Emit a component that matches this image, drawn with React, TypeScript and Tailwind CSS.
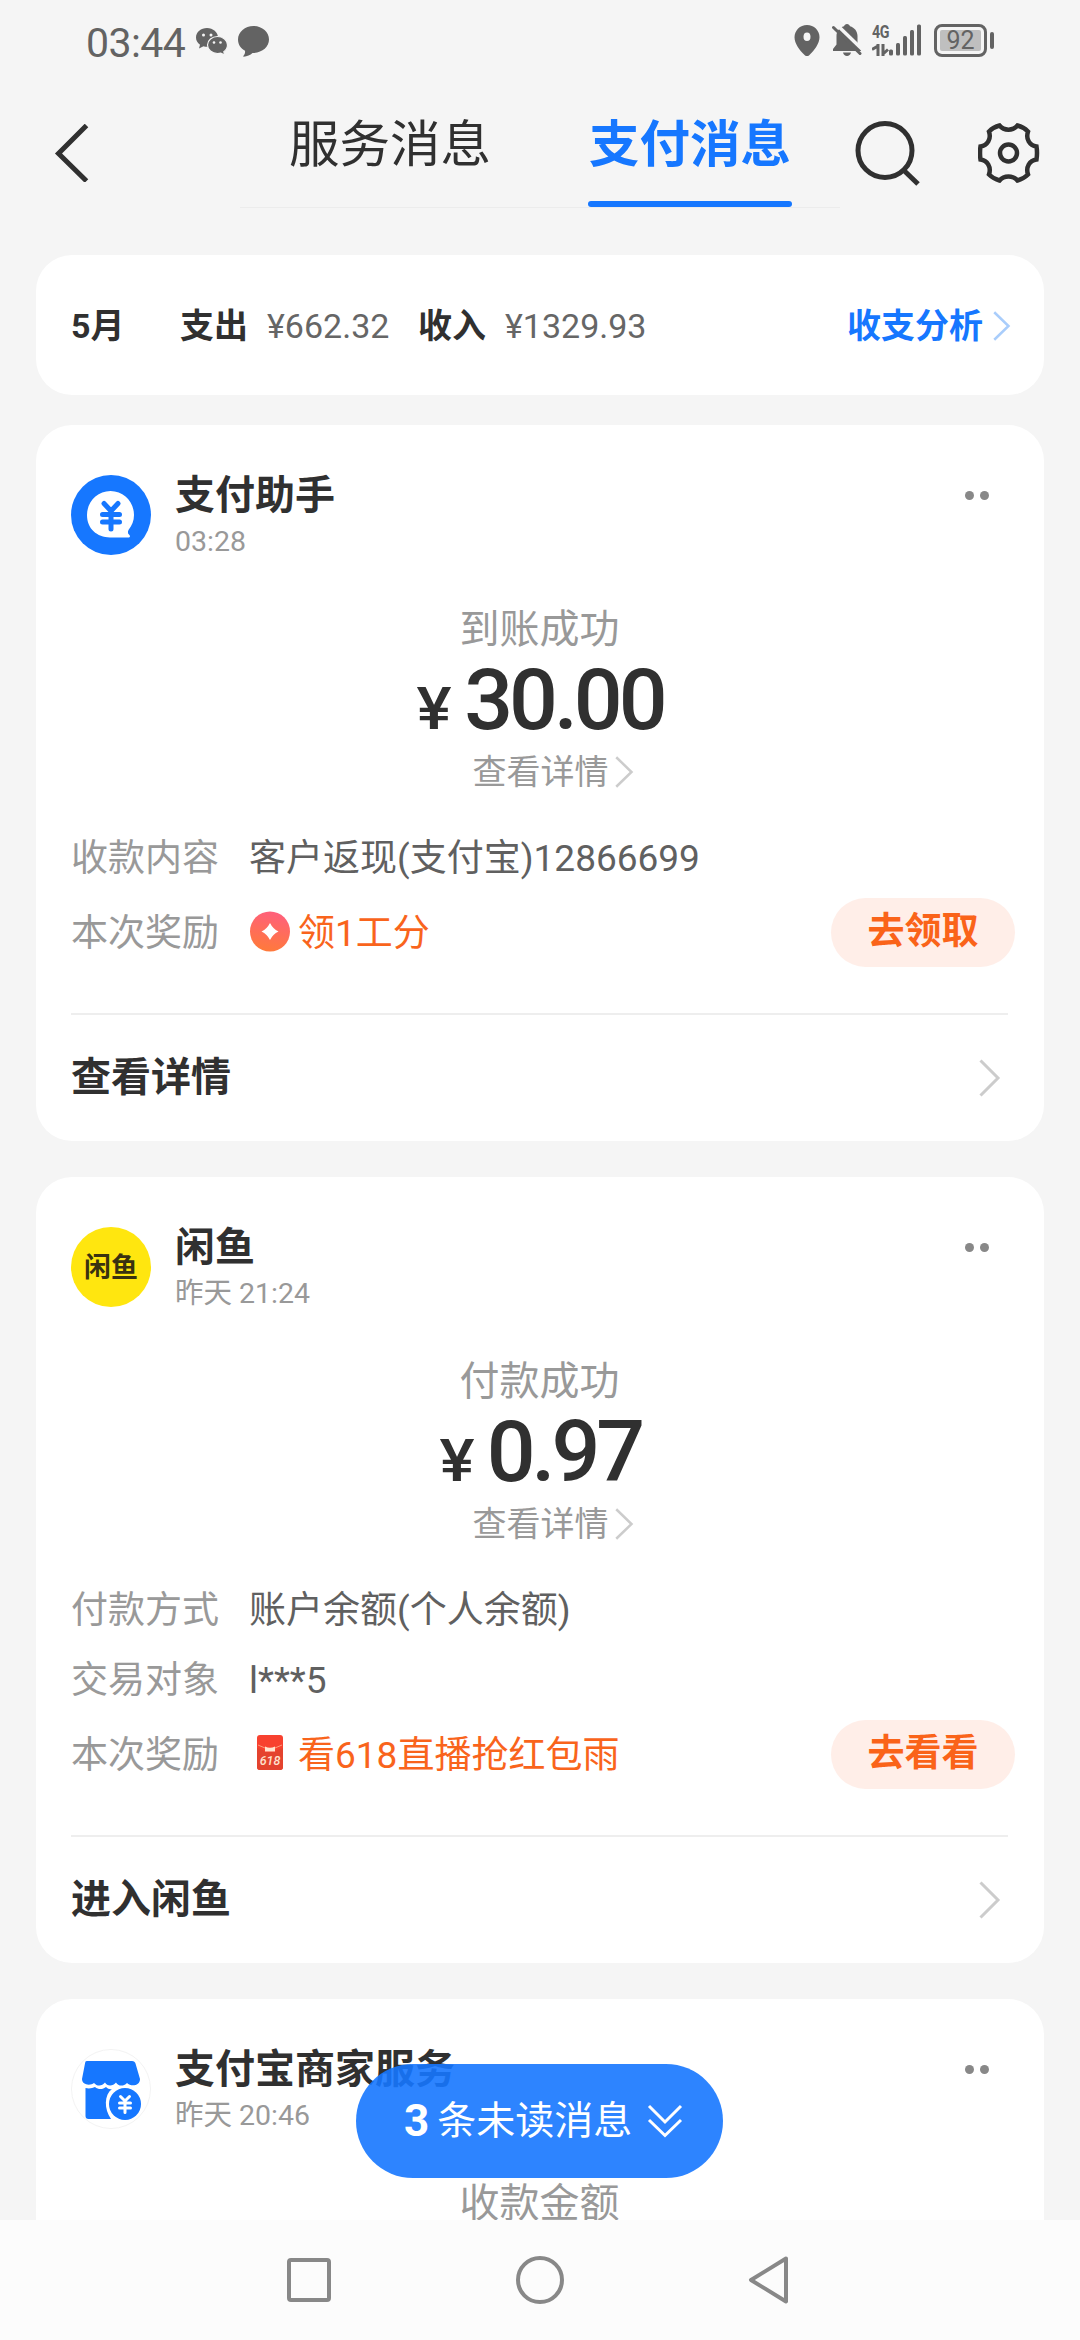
import React from 'react';

type Detail = { label: string; value: string };

interface MessageCardProps {
  avatar: React.ReactNode;
  title: string;
  time: string;
  status: string;
  amount?: string;
  details?: Detail[];
  reward?: { icon: React.ReactNode; text: string; action: string };
  footer?: string;
}

const Chevron: React.FC<{ className: string; width: number; height: number; stroke: number }> = ({
  className,
  width,
  height,
  stroke,
}) => (
  <svg className={className} width={width} height={height} viewBox={`0 0 ${width} ${height}`} fill="none">
    <path
      d={`M${stroke / 2} ${stroke / 2}L${width - stroke} ${height / 2}L${stroke / 2} ${height - stroke / 2}`}
      stroke="currentColor"
      strokeWidth={stroke}
    />
  </svg>
);

const StatusBar = () => (
  <div className="h-20 flex items-start pl-[86px] text-[#636363]">
    <span className="mt-[23px] text-[41px] leading-[40px] w-[110px] tracking-[-0.6px]">03:44</span>
    {/* WeChat */}
    <svg className="mt-[27px]" width="32" height="28" viewBox="0 0 32 28">
      <path
        d="M11 1C5 1 0 5 0 10.500c0 3 1.500 5.500 4 7.200L3 21.500l4.500-2.300c1.200.4 2.300.5 3.500.5 6 0 11-4 11-9.200S17 1 11 1z"
        fill="currentColor"
      />
      <path
        d="M21.500 9.500c-5.500 0-10 3.800-10 8.500s4.500 8.500 10 8.500c1.200 0 2.300-.1 3.300-.4l4 2-1-3.300c2.200-1.600 3.700-4 3.700-6.800 0-4.700-4.500-8.500-10-8.500z"
        fill="currentColor"
        stroke="#f5f5f5"
        strokeWidth="1.200"
      />
      <circle cx="7.500" cy="8" r="1.500" fill="#f5f5f5" />
      <circle cx="15" cy="8" r="1.500" fill="#f5f5f5" />
      <circle cx="18" cy="15.500" r="1.300" fill="#f5f5f5" />
      <circle cx="24.500" cy="15.500" r="1.300" fill="#f5f5f5" />
    </svg>
    {/* SMS bubble */}
    <svg className="mt-[26px] ml-[10px]" width="32" height="31" viewBox="0 0 32 31">
      <path
        d="M15.500 0C7 0 0 6 0 13.500c0 5 2.800 9 7 11.200.3 2-.3 3.800-1.700 5.300-.3.500 0 .8.500.8 3.200-.3 6.500-1.700 8.700-3.800C24 27 31 21 31 13.500S24 0 15.500 0z"
        fill="currentColor"
      />
    </svg>

    <div className="ml-auto mr-[86px] mt-[24px] flex">
      <svg width="26" height="33" viewBox="0 0 26 33" fill="currentColor">
        <path
          fillRule="evenodd"
          d="M13 1C6 1 .5 6.500.5 13.200c0 6 5 13.300 10.300 18 1.300 1.200 3.100 1.200 4.400 0 5.300-4.700 10.300-12 10.300-18C25.500 6.500 20 1 13 1zm0 7.500a3.500 4.300 0 1 1 0 8.600 3.500 4.300 0 0 1 0-8.600z"
        />
      </svg>
      <svg className="ml-[12px]" width="30" height="33" viewBox="0 0 30 33">
        <path
          d="M15 0c-1.500 0-2.700 1-3 2.300C7.500 3.500 4.500 7.500 4.500 12v8.500L1 25v2h28v-2l-3.500-4.500V12c0-4.500-3-8.500-7.500-9.700C17.700 1 16.500 0 15 0zM11 28.500h8c-.5 2.200-2 3.500-4 3.500s-3.500-1.300-4-3.500z"
          fill="currentColor"
        />
        <path d="M3.500-.5L32 27" stroke="#f5f5f5" strokeWidth="3.500" />
        <path d="M1.500 3.500L28 29.500" stroke="currentColor" strokeWidth="3" strokeLinecap="round" />
      </svg>
      <div className="ml-[10px] w-[17px]">
        <div className="h-[16px] text-[19px] leading-[16px] font-bold tracking-[-0.5px] scale-x-75 origin-left">4G</div>
        <svg className="mt-[4px]" width="17" height="12" viewBox="0 0 17 12">
          <path d="M6 0v12M0 5.500L6 2M11 0v12M11 10l5-4.500" stroke="currentColor" strokeWidth="3" fill="none" />
        </svg>
      </div>
      <svg width="33" height="32" viewBox="0 0 33 32" fill="currentColor">
        <rect x="0" y="25.500" width="4" height="6" rx="1.500" />
        <rect x="7" y="19" width="4" height="12.500" rx="1.500" />
        <rect x="14" y="12" width="4" height="19.500" rx="1.500" />
        <rect x="21" y="6" width="4" height="25.500" rx="1.500" />
        <rect x="28" y="0.500" width="4" height="31" rx="1.500" />
      </svg>
      <div className="ml-[12px] w-[53px] h-[33px] rounded-[8px] border-3 border-current p-[3px]">
        <div className="size-full rounded-[2px] bg-[#bfbfbf] text-[25px] leading-[22px] text-center">92</div>
      </div>
      <div className="ml-[3px] mt-[8px] w-[4px] h-[17px] rounded-[2px] bg-current" />
    </div>
  </div>
);

const Header = () => (
  <header className="h-[175px] flex items-start text-[#303030]">
    <svg className="mt-[44px] ml-[54px]" width="36" height="58" viewBox="0 0 36 58" fill="none">
      <path d="M32.500 1.500L4.500 29.500l28 27.500" stroke="currentColor" strokeWidth="5" />
    </svg>
    <nav className="ml-[150px] w-[600px] h-[128px] border-b border-[#ececec] flex text-[50.5px] leading-[60px]">
      <div className="w-[300px] pt-[35px] text-center">服务消息</div>
      <div className="w-[300px] pt-[35px] text-center font-bold text-[#1677ff] relative">
        支付消息
        <span className="absolute left-[48px] top-[121px] w-[204px] h-[6px] rounded-full bg-[#1677ff]" />
      </div>
    </nav>
    <svg className="mt-[39px] ml-[14px]" width="68" height="70" viewBox="0 0 68 70" fill="none" stroke="currentColor">
      <circle cx="31" cy="31.500" r="27" strokeWidth="5" />
      <path d="M50 51.500l14 13.500" strokeWidth="5" />
    </svg>
    <svg className="mt-[42px] ml-[56px]" width="62" height="62" viewBox="0 0 62 62" fill="none" stroke="currentColor">
      <path
        d="M21.500 3.500C26 9 35 9 39.500 3.500Q45.500 5 50 9.500C47.500 17 51.500 23.500 58.500 24.500Q59.500 31 58.500 37.500C51.500 38.500 47.500 45 50 52.500Q45.500 57 39.500 58.500C35 53 26 53 21.500 58.500Q15.500 57 11 52.500C13.500 45 9.500 38.500 2.500 37.500Q1.500 31 2.500 24.500C9.500 23.500 13.500 17 11 9.500Q15.500 5 21.500 3.500Z"
        strokeWidth="4.500"
      />
      <circle cx="30.500" cy="31" r="8.500" strokeWidth="4.500" />
    </svg>
  </header>
);

const PayAvatar = () => (
  <svg width="80" height="80" viewBox="0 0 80 80">
    <circle cx="40" cy="40" r="40" fill="#1677ff" />
    <path
      d="M39.500 16C26 16 16 27 16 40c0 14 10 22 23 22.500h18c2.200 0 2.500-1.500 1.200-2.700-1.400-1.200-1.700-2.800-.7-4.800C61 50.500 63 46 63 40c0-13-10-24-23.500-24z"
      fill="#fff"
    />
    <path
      d="M33 28.500l7 7.500 7-7.500M40 37v17M31.500 39.500h17M31.500 47h17"
      fill="none"
      stroke="#1677ff"
      strokeWidth="5"
      strokeLinecap="round"
    />
  </svg>
);

const FishAvatar = () => (
  <div className="size-20 pt-[3px] rounded-full bg-[#ffe60f] flex items-center justify-center text-[27px] leading-[27px] font-bold text-[#3a3210]">
    闲鱼
  </div>
);

const ShopAvatar = () => (
  <svg width="80" height="80" viewBox="0 0 80 80" fill="#1677ff">
    <circle cx="40" cy="40" r="39.500" fill="#fff" stroke="#f3f3f3" />
    <path d="M16 12h45c2 0 3 1 3.500 2.500L69 30c0 7-9 8-13 4-4 4-9 3-11-.5-3 4-9 4-11 0-3 4-8 4-11 .5-4 3-12 2-12-4l3-15.500c.5-1.500 0-2.500 2-2.500z" />
    <path d="M14.500 39c4 1 7 0 9.500-1 3.500 3 8 2.500 11 0 2 2 4 2.500 6 2-8 6-8 20-1 30H17.500c-2 0-3-1-3-3z" />
    <circle cx="54" cy="55" r="16" />
    <path
      d="M49.500 47.500l4.500 4.500 4.500-4.500M54 52.500v11M48.500 54h11M48.500 59h11"
      fill="none"
      stroke="#fff"
      strokeWidth="3"
      strokeLinecap="round"
    />
  </svg>
);

const PointIcon = () => (
  <svg width="40" height="41" viewBox="0 0 40 41">
    <defs>
      <linearGradient id="point" x1="0.600" y1="0" x2="0.400" y2="1">
        <stop offset="0" stopColor="#ff5f7c" />
        <stop offset="1" stopColor="#ff7a3a" />
      </linearGradient>
    </defs>
    <circle cx="20" cy="20.500" r="20" fill="url(#point)" />
    <path d="M20 12q2.800 5.700 8.500 8.500q-5.700 2.800-8.500 8.500q-2.800-5.700-8.500-8.500q5.700-2.800 8.500-8.500z" fill="#fff" />
  </svg>
);

const RedPacketIcon = () => (
  <svg width="40" height="40" viewBox="0 0 40 40">
    <rect x="7" y="2" width="26" height="35" rx="3" fill="#f8412f" />
    <path d="M7 15q6 1 8 4h10q2-3 8-4v19q0 3-3 3H10q-3 0-3-3z" fill="#e4432e" />
    <path d="M8 12l7 3M32 12l-7 3" stroke="#ff9a7a" strokeWidth="1" />
    <path d="M15 13.500q5 2.500 10 0v5H15z" fill="#ffe3cf" />
    <text x="20" y="32" textAnchor="middle" fontSize="12.500" fontWeight="500" fontStyle="italic" fill="#ffe3cf">
      618
    </text>
  </svg>
);

const MessageCard: React.FC<MessageCardProps> = ({ avatar, title, time, status, amount, details, reward, footer }) => (
  <section className="bg-white rounded-[36px] pl-[35px] pr-9 pt-[50px] shrink-0 last:pb-20">
    <div className="flex items-start h-[130px]">
      {avatar}
      <div className="ml-6">
        <h2 className="mt-px text-[40px] leading-[40px] font-bold text-[#303030]">{title}</h2>
        <p className="mt-[9px] text-[28.5px] leading-[34px] text-[#999]">{time}</p>
      </div>
      <div className="ml-auto mr-[19px] mt-[16px] flex gap-[6px]">
        <span className="size-[9px] rounded-full bg-[#888]" />
        <span className="size-[9px] rounded-full bg-[#888]" />
      </div>
    </div>

    <div className="flex flex-col items-center text-[#999]">
      <p className="text-[40px] leading-[50px]">{status}</p>
      {amount && (
        <>
          <p className="h-[90px] pl-[3px] flex items-baseline font-medium text-[#303030]">
            <span className="text-[60px] leading-[90px] mr-[14px] scale-x-110">¥</span>
            <span className="text-[86px] leading-[90px] tracking-[-4px]">{amount}</span>
          </p>
          <p className="mt-[6px] flex items-center text-[34px] leading-[42px] pl-[27px]">
            查看详情
            <Chevron className="ml-[6px] text-[#ccc]" width={19} height={32} stroke={2.5} />
          </p>
        </>
      )}
    </div>

    {details && (
      <dl className="mt-[31px] text-[37px]">
        {details.map((row) => (
          <div key={row.label} className="flex h-[70px] items-center">
            <dt className="w-[178px] text-[#999]">{row.label}</dt>
            <dd className="text-[#606060]">{row.value}</dd>
          </div>
        ))}
      </dl>
    )}

    {reward && (
      <div className="flex h-[80px] items-center text-[37px]">
        <span className="w-[179px] text-[#999]">本次奖励</span>
        <span className="mb-[6px]">{reward.icon}</span>
        <span className="ml-[8px] text-[#f9641c]">{reward.text}</span>
        <button className="ml-auto mr-[-7px] mb-[4px] w-[184px] h-[69px] rounded-full bg-[#ffeee8] font-bold text-[#fa6319]">
          {reward.action}
        </button>
      </div>
    )}

    {footer && (
      <div className="mt-[39px] h-[128px] border-t-2 border-[#eee] flex items-center justify-between">
        <span className="text-[40px] font-bold text-[#303030]">{footer}</span>
        <Chevron className="mr-[7px] text-[#ccc]" width={22} height={38} stroke={3} />
      </div>
    )}
  </section>
);

const NavBar = () => (
  <footer className="h-[120px] shrink-0 bg-[#fcfcfc] flex items-center justify-center gap-[183px] text-[#888]">
    <svg width="48" height="48" viewBox="0 0 48 48" fill="none" stroke="currentColor" strokeWidth="4">
      <rect x="4" y="4" width="40" height="40" rx="2" />
    </svg>
    <svg width="48" height="48" viewBox="0 0 48 48" fill="none" stroke="currentColor" strokeWidth="4">
      <circle cx="24" cy="24" r="22" />
    </svg>
    <svg width="48" height="48" viewBox="0 0 48 48" fill="none" stroke="currentColor" strokeWidth="4">
      <path d="M39 2.500L4 24l35 21.500z" strokeLinejoin="round" />
    </svg>
  </footer>
);

const App: React.FC = () => {
  return (
    <div className="w-[1080px] h-[2340px] flex flex-col overflow-hidden bg-[#f5f5f5] font-[Roboto,'Noto_Sans_CJK_SC',sans-serif]">
      <StatusBar />
      <Header />

      <main className="relative flex-1 min-h-0 overflow-hidden px-9 flex flex-col">
        {/* Monthly summary */}
        <section className="h-[140px] shrink-0 mb-[30px] bg-white rounded-[36px] pl-[35px] pr-9 pt-[2px] flex items-center text-[34px] text-[#303030]">
          <b className="w-[109px]">5月</b>
          <b>支出</b>
          <span className="ml-[19px] w-[151px] text-[#666]">¥662.32</span>
          <b>收入</b>
          <span className="ml-[19px] text-[#666]">¥1329.93</span>
          <a className="ml-auto mr-[-3px] flex items-center font-bold text-[#1677ff]">
            收支分析
            <Chevron className="ml-[10px] text-[#a9cdfb]" width={18} height={30} stroke={2.5} />
          </a>
        </section>

        <div className="flex flex-col gap-9">
          <MessageCard
            avatar={<PayAvatar />}
            title="支付助手"
            time="03:28"
            status="到账成功"
            amount="30.00"
            details={[{ label: '收款内容', value: '客户返现(支付宝)12866699' }]}
            reward={{ icon: <PointIcon />, text: '领1工分', action: '去领取' }}
            footer="查看详情"
          />
          <MessageCard
            avatar={<FishAvatar />}
            title="闲鱼"
            time="昨天 21:24"
            status="付款成功"
            amount="0.97"
            details={[
              { label: '付款方式', value: '账户余额(个人余额)' },
              { label: '交易对象', value: 'l***5' },
            ]}
            reward={{ icon: <RedPacketIcon />, text: '看618直播抢红包雨', action: '去看看' }}
            footer="进入闲鱼"
          />
          <MessageCard avatar={<ShopAvatar />} title="支付宝商家服务" time="昨天 20:46" status="收款金额" />
        </div>

        {/* Unread messages pill */}
        <button className="absolute left-[356px] bottom-[42px] w-[367px] h-[114px] rounded-full bg-[#1677ff]/90 flex items-center pl-[48px] text-[39px] text-white">
          <b className="text-[44px] mr-[8px]">3</b>
          条未读消息
          <svg className="ml-[15px]" width="36" height="34" viewBox="0 0 36 34" fill="none" stroke="currentColor" strokeWidth="3">
            <path d="M2 2l16 16L34 2M2 16l16 15.500L34 16" />
          </svg>
        </button>
      </main>

      <NavBar />
    </div>
  );
};

export default App;
